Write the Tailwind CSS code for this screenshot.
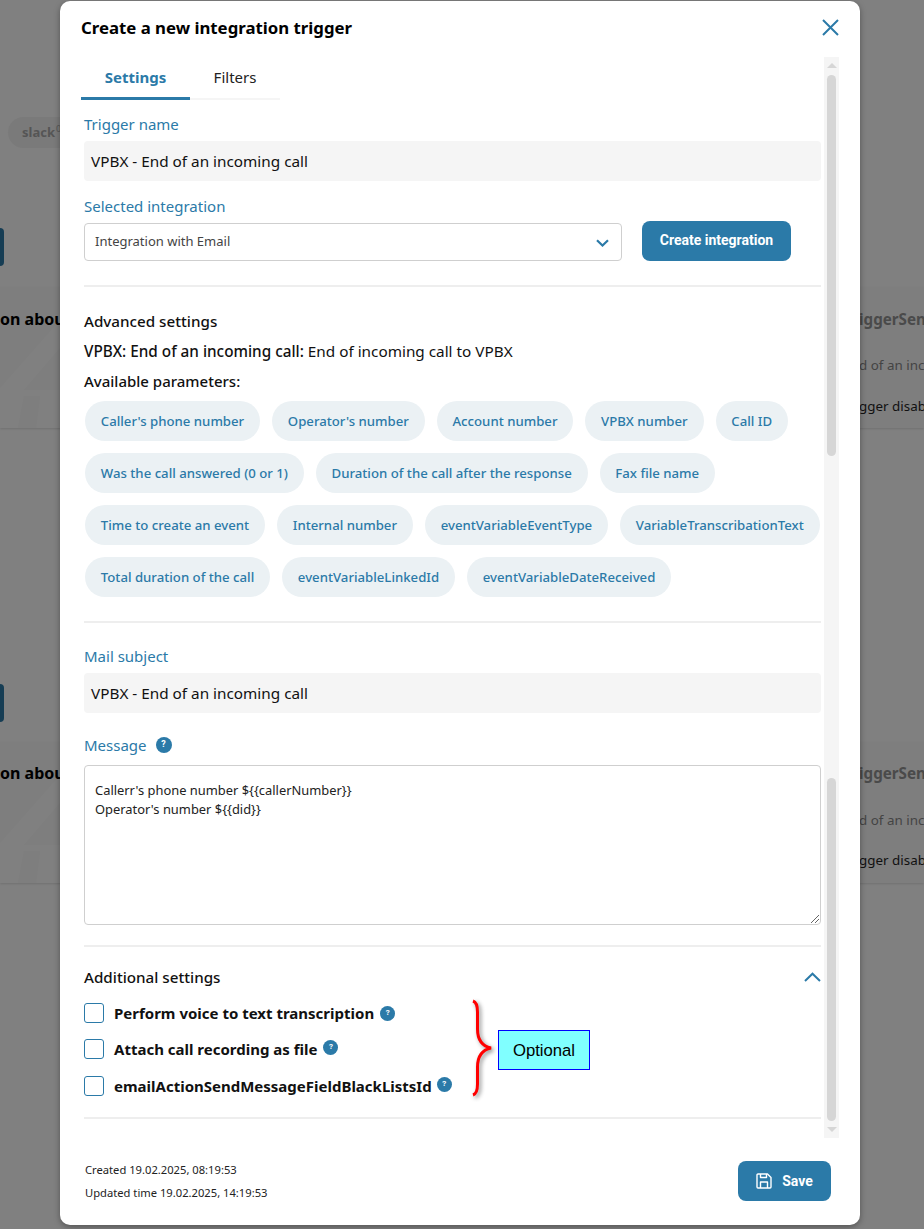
<!DOCTYPE html>
<html>
<head>
<meta charset="utf-8">
<script src="https://cdn.jsdelivr.net/npm/@tailwindcss/browser@4"></script>
</head>
<body class="m-0 overflow-hidden bg-[#808080] font-['Noto_Sans',sans-serif]">
<div class="relative h-[1229px] w-[924px] overflow-hidden">
  <!-- dimmed page behind the dialog -->
  <div class="absolute left-[8px] top-[117px] flex h-[31px] w-[70px] items-center rounded-full bg-[#7a7a7a] pl-[14px] text-[13px] font-bold text-[#555]">slack</div>
  <div class="absolute left-[56px] top-[122px] text-[9px] text-[#555]">0</div>
  <div class="absolute left-0 top-[228px] h-[38px] w-[4px] rounded-r-[4px] bg-[#163d54]"></div>
  <div class="absolute left-0 top-[684px] h-[38px] w-[4px] rounded-r-[4px] bg-[#163d54]"></div>
  <div class="absolute inset-x-0 top-[287px] h-[141px] bg-[#7e7e7e] shadow-[0_1px_2px_rgba(0,0,0,0.12)]"></div>
  <div class="absolute inset-x-0 top-[742px] h-[141px] bg-[#7e7e7e] shadow-[0_1px_2px_rgba(0,0,0,0.12)]"></div>
  <svg class="absolute left-0 top-[320px] h-[108px] w-[60px]" viewBox="0 0 60 108"><path d="M60 0 0 68V108H18L24 76H40L36 108H60V70H24L60 28z" fill="#ffffff" fill-opacity=".015"/></svg>
  <svg class="absolute left-0 top-[775px] h-[108px] w-[60px]" viewBox="0 0 60 108"><path d="M60 0 0 68V108H18L24 76H40L36 108H60V70H24L60 28z" fill="#ffffff" fill-opacity=".015"/></svg>
  <div class="absolute left-0 top-[307px] text-[16px] font-bold text-black whitespace-nowrap">on abou</div>
  <div class="absolute left-0 top-[761px] text-[16px] font-bold text-black whitespace-nowrap">on abou</div>
  <div class="absolute left-[859px] top-[308px] text-[15.2px] font-bold text-[#4a4a4a] whitespace-nowrap">iggerSen</div>
  <div class="absolute left-[859px] top-[762px] text-[15.2px] font-bold text-[#4a4a4a] whitespace-nowrap">iggerSen</div>
  <div class="absolute left-[859px] top-[355px] text-[13.4px] text-[#444] whitespace-nowrap">d of an inc</div>
  <div class="absolute left-[859px] top-[810px] text-[13.4px] text-[#444] whitespace-nowrap">d of an inc</div>
  <div class="absolute left-[859px] top-[396px] text-[13.4px] text-[#111] whitespace-nowrap">gger disabl</div>
  <div class="absolute left-[859px] top-[850px] text-[13.4px] text-[#111] whitespace-nowrap">gger disabl</div>

  <!-- dialog -->
  <div class="absolute left-[60px] top-[1px] flex h-[1224px] w-[800px] flex-col rounded-[10px] bg-white pl-[21px] shadow-[0_2px_6px_rgba(0,0,0,0.35)]">
    <div class="flex h-[52px] items-center justify-between pr-[21px] pt-[2px]">
      <h1 class="text-[16.8px] font-bold leading-[24px] text-black">Create a new integration trigger</h1>
      <svg class="mb-[2px] h-[17px] w-[17px] text-[#2b7aa8]" viewBox="0 0 17 17" fill="none" stroke="currentColor" stroke-width="2"><path d="M1 1 16 16M16 1 1 16"/></svg>
    </div>
    <div class="mt-[8px] flex h-[39px] w-[199px] border-b-2 border-[#f5f5f5]">
      <div class="flex h-[39px] w-[109px] items-start justify-center border-b-[3px] border-[#2b7aa8] pt-[6px] text-[15px] font-bold leading-[20px] text-[#2b7aa8]">Settings</div>
      <div class="flex w-[90px] items-start justify-center pt-[6px] text-[15px] leading-[20px] text-[#222]">Filters</div>
    </div>

    <div class="flex w-[740px] flex-col pl-[3px]">
      <label class="mt-[14px] block text-[15px] leading-[20px] text-[#2b7aa8]">Trigger name</label>
      <div class="mt-[7px] flex h-[40px] items-center rounded-[4px] bg-[#f5f5f5] px-[7px] text-[15.3px] text-[#111]">VPBX - End of an incoming call</div>

      <label class="mt-[15px] block text-[15px] leading-[20px] text-[#2b7aa8]">Selected integration</label>
      <div class="mt-[5px] flex items-end gap-[20px]">
        <div class="flex h-[38px] w-[538px] items-center justify-between rounded-[4px] border border-[#cfcfcf] pl-[10px] pr-[12px] text-[13px] text-[#444]">
          <span>Integration with Email</span>
          <svg class="mt-[1px] h-[8px] w-[13px] text-[#2b7aa8]" viewBox="0 0 13 8" fill="none" stroke="currentColor" stroke-width="2.2"><path d="M1 1.2 6.5 6.5 12 1.2"/></svg>
        </div>
        <button class="flex h-[40px] w-[149px] items-center justify-center rounded-[8px] bg-[#2b7aa8] pb-[2px] font-['Roboto',sans-serif] text-[14px] font-bold text-white">Create integration</button>
      </div>
      <div class="mt-[24px] h-[2px] bg-[#eeeeee]"></div>

      <div class="mt-[24px] text-[15.2px] font-medium leading-[20px] text-[#111]">Advanced settings</div>
      <div class="mt-[10px] text-[15.3px] leading-[20px] text-[#111]"><span class="font-medium">VPBX: End of an incoming call:</span> End of incoming call to VPBX</div>
      <div class="mt-[10px] text-[15px] font-medium leading-[20px] text-[#111]">Available parameters:</div>

      <div class="mt-[10px] flex flex-wrap gap-x-[12px] gap-y-[12px] pl-[1px] text-[13.2px] font-medium text-[#2b7aa8]">
        <span class="flex h-[40px] items-center rounded-full bg-[#ebf1f4] px-[15.8px] pt-[1px]">Caller's phone number</span>
        <span class="flex h-[40px] items-center rounded-full bg-[#ebf1f4] px-[15.8px] pt-[1px]">Operator's number</span>
        <span class="flex h-[40px] items-center rounded-full bg-[#ebf1f4] px-[15.8px] pt-[1px]">Account number</span>
        <span class="flex h-[40px] items-center rounded-full bg-[#ebf1f4] px-[15.8px] pt-[1px]">VPBX number</span>
        <span class="flex h-[40px] items-center rounded-full bg-[#ebf1f4] px-[15.8px] pt-[1px]">Call ID</span>
        <span class="flex h-[40px] items-center rounded-full bg-[#ebf1f4] px-[15.8px] pt-[1px]">Was the call answered (0 or 1)</span>
        <span class="flex h-[40px] items-center rounded-full bg-[#ebf1f4] px-[15.8px] pt-[1px]">Duration of the call after the response</span>
        <span class="flex h-[40px] items-center rounded-full bg-[#ebf1f4] px-[15.8px] pt-[1px]">Fax file name</span>
        <span class="flex h-[40px] items-center rounded-full bg-[#ebf1f4] px-[15.8px] pt-[1px]">Time to create an event</span>
        <span class="flex h-[40px] items-center rounded-full bg-[#ebf1f4] px-[15.8px] pt-[1px]">Internal number</span>
        <span class="flex h-[40px] items-center rounded-full bg-[#ebf1f4] px-[15.8px] pt-[1px]">eventVariableEventType</span>
        <span class="flex h-[40px] items-center rounded-full bg-[#ebf1f4] px-[15.8px] pt-[1px]">VariableTranscribationText</span>
        <span class="flex h-[40px] items-center rounded-full bg-[#ebf1f4] px-[15.8px] pt-[1px]">Total duration of the call</span>
        <span class="flex h-[40px] items-center rounded-full bg-[#ebf1f4] px-[15.8px] pt-[1px]">eventVariableLinkedId</span>
        <span class="flex h-[40px] items-center rounded-full bg-[#ebf1f4] px-[15.8px] pt-[1px]">eventVariableDateReceived</span>
      </div>
      <div class="mt-[24px] h-[2px] bg-[#eeeeee]"></div>

      <label class="mt-[23px] block text-[15px] leading-[20px] text-[#2b7aa8]">Mail subject</label>
      <div class="mt-[7px] flex h-[40px] items-center rounded-[4px] bg-[#f5f5f5] px-[7px] text-[15.3px] text-[#111]">VPBX - End of an incoming call</div>

      <div class="mt-[22px] flex h-[20px] items-center gap-[9px] text-[15px] text-[#2b7aa8]">
        <span>Message</span>
        <span class="flex h-[16px] w-[16px] items-center justify-center rounded-full bg-[#2b7aa8] font-['Roboto',sans-serif] text-[9px] font-bold text-white">?</span>
      </div>
      <div class="relative mt-[10px] h-[160px] rounded-[4px] border border-[#cfcfcf] pl-[10px] pt-[15px] text-[12.9px] leading-[19px] text-[#222]">
        <div>Callerr's phone number ${{callerNumber}}</div>
        <div>Operator's number ${{did}}</div>
        <svg class="absolute bottom-[1px] right-[1px] h-[9px] w-[9px] text-[#666]" viewBox="0 0 9 9" fill="none" stroke="currentColor" stroke-width="1"><path d="M1 9 9 1M5 9 9 5"/></svg>
      </div>
      <div class="mt-[20px] h-[2px] bg-[#eeeeee]"></div>

      <div class="mt-[20px] flex h-[20px] items-center justify-between text-[15.2px] font-medium text-[#111]">
        <span>Additional settings</span>
        <svg class="h-[10px] w-[17px] text-[#2b7aa8]" viewBox="0 0 17 10" fill="none" stroke="currentColor" stroke-width="2"><path d="M1 9 8.5 1.7 16 9"/></svg>
      </div>

      <div class="mt-[16px] flex h-[20px] items-center text-[15px] font-bold text-[#111]">
        <span class="h-[20px] w-[20px] rounded-[3px] border border-[#2b7aa8]"></span>
        <span class="ml-[10px]">Perform voice to text transcription</span>
        <span class="ml-[6px] flex h-[15px] w-[15px] items-center justify-center rounded-full bg-[#2b7aa8] font-['Roboto',sans-serif] text-[8px] font-bold text-white">?</span>
      </div>
      <div class="mt-[16px] flex h-[20px] items-center text-[15px] font-bold text-[#111]">
        <span class="h-[20px] w-[20px] rounded-[3px] border border-[#2b7aa8]"></span>
        <span class="ml-[10px]">Attach call recording as file</span>
        <span class="mb-[4px] ml-[6px] flex h-[15px] w-[15px] items-center justify-center rounded-full bg-[#2b7aa8] font-['Roboto',sans-serif] text-[8px] font-bold text-white">?</span>
      </div>
      <div class="mt-[17px] flex h-[20px] items-center text-[15px] font-bold text-[#111]">
        <span class="h-[20px] w-[20px] rounded-[3px] border border-[#2b7aa8]"></span>
        <span class="ml-[10px]">emailActionSendMessageFieldBlackListsId</span>
        <span class="mb-[4px] ml-[5px] flex h-[15px] w-[15px] items-center justify-center rounded-full bg-[#2b7aa8] font-['Roboto',sans-serif] text-[8px] font-bold text-white">?</span>
      </div>
      <div class="mt-[21px] h-[2px] bg-[#eeeeee]"></div>
    </div>

    <div class="mt-[42px] flex w-[750px] items-start justify-between">
      <div class="flex flex-col gap-[6px] pl-[4px] text-[11.2px] leading-[17px] text-[#222]">
        <span>Created 19.02.2025, 08:19:53</span>
        <span>Updated time 19.02.2025, 14:19:53</span>
      </div>
      <button class="flex h-[40px] w-[93px] items-center justify-center gap-[10px] rounded-[8px] bg-[#2b7aa8] font-['Roboto',sans-serif] text-[14px] font-bold text-white">
        <svg class="h-[16px] w-[16px]" viewBox="0 0 16 16" fill="none" stroke="currentColor" stroke-width="1.4" stroke-linejoin="round"><path d="M1 2a1 1 0 0 1 1-1h9.5L15 4.5V14a1 1 0 0 1-1 1H2a1 1 0 0 1-1-1z"/><path d="M4.5 1v3.5h6V1M4.5 15V9h7v6"/></svg>
        <span>Save</span>
      </button>
    </div>

    <!-- custom scrollbar -->
    <div class="absolute left-[764px] top-[56px] h-[1081px] w-[15px] bg-[#f5f5f5]">
      <div class="absolute left-[2.5px] top-[6px] h-0 w-0 border-x-[5px] border-b-[5px] border-x-transparent border-b-[#d6d6d6]"></div>
      <div class="absolute left-[3px] top-[18px] h-[381px] w-[9px] rounded-full bg-[#d6d6d6]"></div>
      <div class="absolute left-[3px] top-[721px] h-[343px] w-[9px] rounded-full bg-[#d6d6d6]"></div>
      <div class="absolute bottom-[6px] left-[2.5px] h-0 w-0 border-x-[5px] border-t-[5px] border-x-transparent border-t-[#d6d6d6]"></div>
    </div>
  </div>

  <!-- annotation over the dialog -->
  <svg class="absolute left-[468px] top-[996px] h-[106px] w-[30px]" viewBox="0 0 30 106" fill="none" style="filter:drop-shadow(2px 2px 2px rgba(0,0,0,.45))">
    <path d="M5 5C8 6 9.5 9 9.5 16V33C9.5 44 14 50 23 52C14 54 9.5 60 9.5 71V88C9.5 95 8 98 5 99" stroke="#ff0000" stroke-width="3"/>
  </svg>
  <div class="absolute left-[498px] top-[1030px] flex h-[40px] w-[92px] items-center justify-center border border-[#0000ff] bg-[#80ffff] pt-[1px] font-['Liberation_Sans',sans-serif] text-[16.7px] text-black">Optional</div>
</div>
</body>
</html>
